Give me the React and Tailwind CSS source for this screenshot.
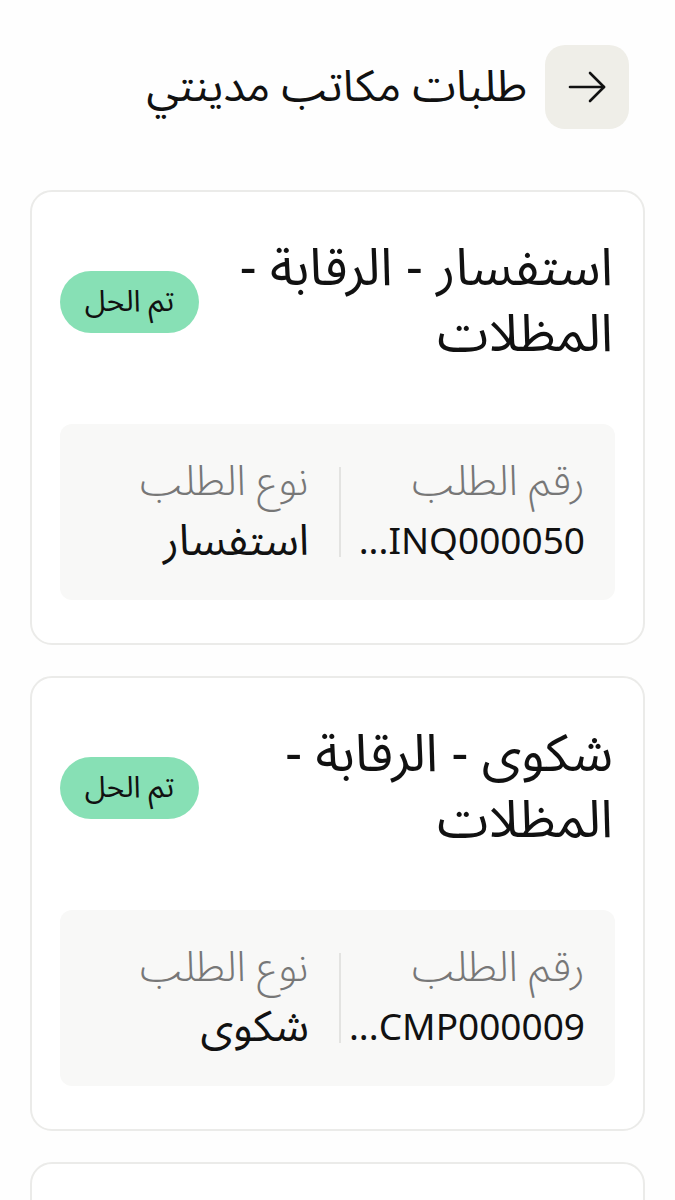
const requests = [
  { id: 1, title: "استفسار - الرقابة - المظلات", number: "INQ000050...", type: "استفسار" },
  { id: 2, title: "شكوى - الرقابة - المظلات", number: "CMP000009...", type: "شكوى" },
  { id: 3, title: "شكوى - الرقابة - المظلات", number: "CMP000008...", type: "شكوى" },
];

const RequestCard = ({ item }) => {
  return (
    <div className="rounded-[22px] border-2 border-[#ebebe9] bg-white px-[28px] pt-[44px] pb-[43px]">
      <div className="flex items-center justify-between gap-4">
        <h2 className="text-[52px] leading-[66px] text-[#111] pr-[2px] max-w-[410px]">{item.title}</h2>
        <span className="shrink-0 rounded-full bg-[#87e0b5] w-[139px] h-[62px] flex items-center justify-center text-[30px] leading-none text-[#111]">
          تم الحل
        </span>
      </div>

      <div className="mt-[56px] rounded-[12px] bg-[#f8f8f7] h-[176px] flex items-center px-[30px]">
        <div className="w-[230px] flex flex-col gap-[14px]">
          <span className="text-[42px] leading-[46px] text-[#777] font-light">رقم الطلب</span>
          <span className="text-[37px] leading-[46px] text-[#111]">{item.number}</span>
        </div>
        <div className="w-[2px] h-[90px] bg-[#e3e3e1] mr-[14px] ml-[30px]"></div>
        <div className="flex flex-col gap-[14px]">
          <span className="text-[42px] leading-[46px] text-[#777] font-light">نوع الطلب</span>
          <span className="text-[43px] leading-[46px] text-[#111]">{item.type}</span>
        </div>
      </div>
    </div>
  );
};

const App = () => {
  return (
    <div
      dir="rtl"
      className="min-h-[1200px] bg-[#fefefe] px-[30px]"
      style={{ fontFamily: '"Noto Sans Arabic", "Noto Sans", "DejaVu Sans", sans-serif' }}
    >
      <div className="flex items-center gap-[18px] pt-[45px] pr-[16px] pb-[61px]">
        <button className="w-[84px] h-[84px] rounded-[20px] bg-[#efeee8] flex items-center justify-center">
          <svg width="40" height="34" viewBox="0 0 40 34" fill="none" stroke="#111" strokeWidth="2.6" strokeLinecap="round" strokeLinejoin="round">
            <path d="M3 17 H37" />
            <path d="M23 3 L37 17 L23 31" />
          </svg>
        </button>
        <h1 className="text-[44px] leading-[60px] text-[#111]">طلبات مكاتب مدينتي</h1>
      </div>

      <div className="flex flex-col gap-[31px]">
        {requests.map((item) => (
          <RequestCard key={item.id} item={item} />
        ))}
      </div>
    </div>
  );
};

export default App;
